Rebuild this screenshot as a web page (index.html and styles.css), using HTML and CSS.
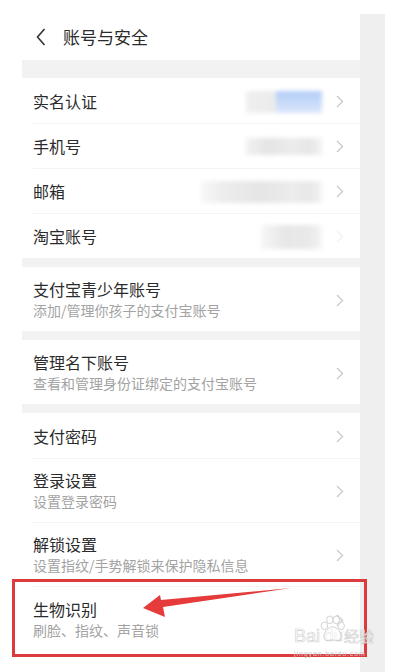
FILE: index.html
```html
<!DOCTYPE html>
<html lang="zh-CN">
<head>
    <meta charset="UTF-8">
    <meta name="viewport" content="width=device-width, initial-scale=1.0">
    <title>账号与安全</title>
    <link rel="stylesheet" href="styles.css">
</head>
<body>
    <div class="page">
        <div class="phone">
            <!-- Header -->
            <div class="header">
                <svg class="back" width="10" height="18" viewBox="0 0 10 18"><polyline points="8.5,1 1.5,9 8.5,17" fill="none" stroke="#333" stroke-width="1.6"/></svg>
                <span class="title">账号与安全</span>
            </div>

            <div class="band band-top"></div>

            <!-- Account info -->
            <div class="group">
                <div class="row">
                    <span class="label">实名认证</span>
                    <div class="blur blur-blue"></div>
                    <svg class="arrow" width="8" height="13" viewBox="0 0 8 13"><polyline points="1,1 6.5,6.5 1,12" fill="none" stroke="#c9c9c9" stroke-width="1.3"/></svg>
                </div>
                <div class="row">
                    <span class="label">手机号</span>
                    <div class="blur blur-phone"></div>
                    <svg class="arrow" width="8" height="13" viewBox="0 0 8 13"><polyline points="1,1 6.5,6.5 1,12" fill="none" stroke="#c9c9c9" stroke-width="1.3"/></svg>
                </div>
                <div class="row">
                    <span class="label">邮箱</span>
                    <div class="blur blur-mail"></div>
                    <svg class="arrow" width="8" height="13" viewBox="0 0 8 13"><polyline points="1,1 6.5,6.5 1,12" fill="none" stroke="#c9c9c9" stroke-width="1.3"/></svg>
                </div>
                <div class="row">
                    <span class="label">淘宝账号</span>
                    <div class="blur blur-taobao"></div>
                    <svg class="arrow faded" width="8" height="13" viewBox="0 0 8 13"><polyline points="1,1 6.5,6.5 1,12" fill="none" stroke="#c9c9c9" stroke-width="1.3"/></svg>
                </div>
            </div>

            <div class="band"></div>

            <div class="group">
                <div class="row row-tall">
                    <div class="text">
                        <span class="label">支付宝青少年账号</span>
                        <span class="sub">添加/管理你孩子的支付宝账号</span>
                    </div>
                    <svg class="arrow" width="8" height="13" viewBox="0 0 8 13"><polyline points="1,1 6.5,6.5 1,12" fill="none" stroke="#c9c9c9" stroke-width="1.3"/></svg>
                </div>
            </div>

            <div class="band"></div>

            <div class="group">
                <div class="row row-tall">
                    <div class="text">
                        <span class="label">管理名下账号</span>
                        <span class="sub">查看和管理身份证绑定的支付宝账号</span>
                    </div>
                    <svg class="arrow" width="8" height="13" viewBox="0 0 8 13"><polyline points="1,1 6.5,6.5 1,12" fill="none" stroke="#c9c9c9" stroke-width="1.3"/></svg>
                </div>
            </div>

            <div class="band"></div>

            <!-- Security -->
            <div class="group">
                <div class="row">
                    <span class="label">支付密码</span>
                    <svg class="arrow" width="8" height="13" viewBox="0 0 8 13"><polyline points="1,1 6.5,6.5 1,12" fill="none" stroke="#c9c9c9" stroke-width="1.3"/></svg>
                </div>
                <div class="row row-tall">
                    <div class="text">
                        <span class="label">登录设置</span>
                        <span class="sub">设置登录密码</span>
                    </div>
                    <svg class="arrow" width="8" height="13" viewBox="0 0 8 13"><polyline points="1,1 6.5,6.5 1,12" fill="none" stroke="#c9c9c9" stroke-width="1.3"/></svg>
                </div>
                <div class="row row-tall">
                    <div class="text">
                        <span class="label">解锁设置</span>
                        <span class="sub">设置指纹/手势解锁来保护隐私信息</span>
                    </div>
                    <svg class="arrow" width="8" height="13" viewBox="0 0 8 13"><polyline points="1,1 6.5,6.5 1,12" fill="none" stroke="#c9c9c9" stroke-width="1.3"/></svg>
                </div>
                <div class="row row-tall row-last">
                    <div class="text">
                        <span class="label">生物识别</span>
                        <span class="sub">刷脸、指纹、声音锁</span>
                    </div>
                    <svg class="arrow" width="8" height="13" viewBox="0 0 8 13"><polyline points="1,1 6.5,6.5 1,12" fill="none" stroke="#c9c9c9" stroke-width="1.3"/></svg>
                </div>
            </div>
        </div>

        <div class="scrollbar"></div>

        <!-- Annotation -->
        <div class="mark-box"></div>
        <svg class="mark-arrow" width="160" height="34" viewBox="140 586 160 34">
            <polygon points="143,608 160,595 161,600 291,588 163,607 165,617" fill="#e53b3b"/>
        </svg>

        <!-- Watermark -->
        <div class="watermark">
            <div class="wm-logo">
                <span>Bai</span>
                <span class="wm-du">
                    <svg class="wm-paw" width="26" height="28" viewBox="0 0 24 26">
                        <g fill="rgba(255,255,255,0.6)" stroke="#cfcfcf" stroke-width="0.9">
                            <ellipse cx="5" cy="10" rx="3" ry="3.6"/>
                            <ellipse cx="10" cy="4.5" rx="3" ry="3.6"/>
                            <ellipse cx="16" cy="4.5" rx="3" ry="3.6"/>
                            <ellipse cx="20.5" cy="10" rx="3" ry="3.6"/>
                            <path d="M12.5 11 C8 11 4 17 4.5 21 C5 24.5 9 24 12.5 23 C16 24 20 24.5 20.5 21 C21 17 17 11 12.5 11 Z"/>
                        </g>
                    </svg>
                    du
                </span>
                <span class="wm-cn">经验</span>
            </div>
            <div class="wm-url">jingyan.baidu.com</div>
        </div>
    </div>
</body>
</html>
```

FILE: styles.css
```css
* {
    box-sizing: border-box;
    margin: 0;
    padding: 0;
}

body {
    background: #fff;
    font-family: "Noto Sans CJK SC", "Noto Sans", sans-serif;
    color: #333;
}

.page {
    position: relative;
    width: 412px;
    height: 672px;
    overflow: hidden;
    display: flex;
}

.phone {
    width: 338px;
    margin-left: 22px;
    background: #fff;
}

.header {
    height: 60px;
    padding: 14px 0 0 14px;
    display: flex;
    align-items: center;
    gap: 17px;
}

.header .title {
    font-size: 17px;
    line-height: 24px;
    color: #2b2b2b;
}

.band {
    height: 9px;
    background: #f2f2f2;
}

.band-top {
    height: 18px;
}

.group {
    background: #fff;
}

.row {
    height: 45px;
    padding: 2px 16px 0 11px;
    display: flex;
    align-items: center;
    position: relative;
}

.row + .row::before {
    content: "";
    position: absolute;
    top: 0;
    left: 11px;
    right: 0;
    height: 1px;
    background: #f4f4f4;
}

.row-tall {
    height: 64px;
}

.row-last {
    height: 76px;
    padding-bottom: 10px;
}

.text {
    display: flex;
    flex-direction: column;
}

.label {
    font-size: 16px;
    line-height: 21px;
    color: #2b2b2b;
}

.sub {
    font-size: 14px;
    line-height: 21px;
    color: #a3a3a3;
}

.row > .label,
.row > .text {
    flex: 1;
}

.arrow {
    flex: none;
    margin-left: 14px;
}

.arrow.faded {
    opacity: 0.25;
}

.blur {
    flex: none;
    height: 22px;
    filter: blur(2px);
}

.blur-blue {
    width: 76px;
    background:
        linear-gradient(#b1ccf6, #dbe7fb) 30px 0 / 46px 100% no-repeat,
        linear-gradient(90deg, #efefef, #e6e6e6);
}

.blur-phone {
    width: 76px;
    height: 17px;
    background: linear-gradient(90deg, #f1f1f1, #e4e4e4 30%, #ececec 60%, #e6e6e6 85%, #f3f3f3);
}

.blur-mail {
    width: 121px;
    height: 22px;
    background: linear-gradient(90deg, #f7f7f7, #ececec 20%, #e5e5e5 50%, #ececec 75%, #e8e8e8 90%, #f4f4f4);
}

.blur-taobao {
    width: 61px;
    height: 24px;
    background: linear-gradient(90deg, #f6f6f6, #e7e7e7 40%, #e9e9e9 80%, #f5f5f5);
}

.scrollbar {
    width: 25px;
    margin-top: 14px;
    background: #efefef;
}

.mark-box {
    position: absolute;
    left: 12px;
    top: 579px;
    width: 355px;
    height: 78px;
    border: 3px solid #dc3b3d;
}

.mark-arrow {
    position: absolute;
    left: 140px;
    top: 586px;
}

.watermark {
    position: absolute;
    left: 294px;
    top: 626px;
    font-family: "Liberation Sans", sans-serif;
}

.wm-logo {
    display: flex;
    align-items: flex-end;
    font-size: 18px;
    line-height: 20px;
    color: rgba(255, 255, 255, 0.7);
    -webkit-text-stroke: 0.6px #cfcfcf;
}

.wm-du {
    position: relative;
    margin-left: 4px;
    font-size: 17px;
}

.wm-paw {
    position: absolute;
    left: -5px;
    bottom: 3px;
}

.wm-cn {
    font-family: "Noto Sans CJK SC", sans-serif;
    font-size: 15px;
    margin-left: 1px;
}

.wm-url {
    font-size: 7px;
    line-height: 8px;
    color: #cccccc;
    letter-spacing: 0.9px;
    margin-top: 4px;
}
```
